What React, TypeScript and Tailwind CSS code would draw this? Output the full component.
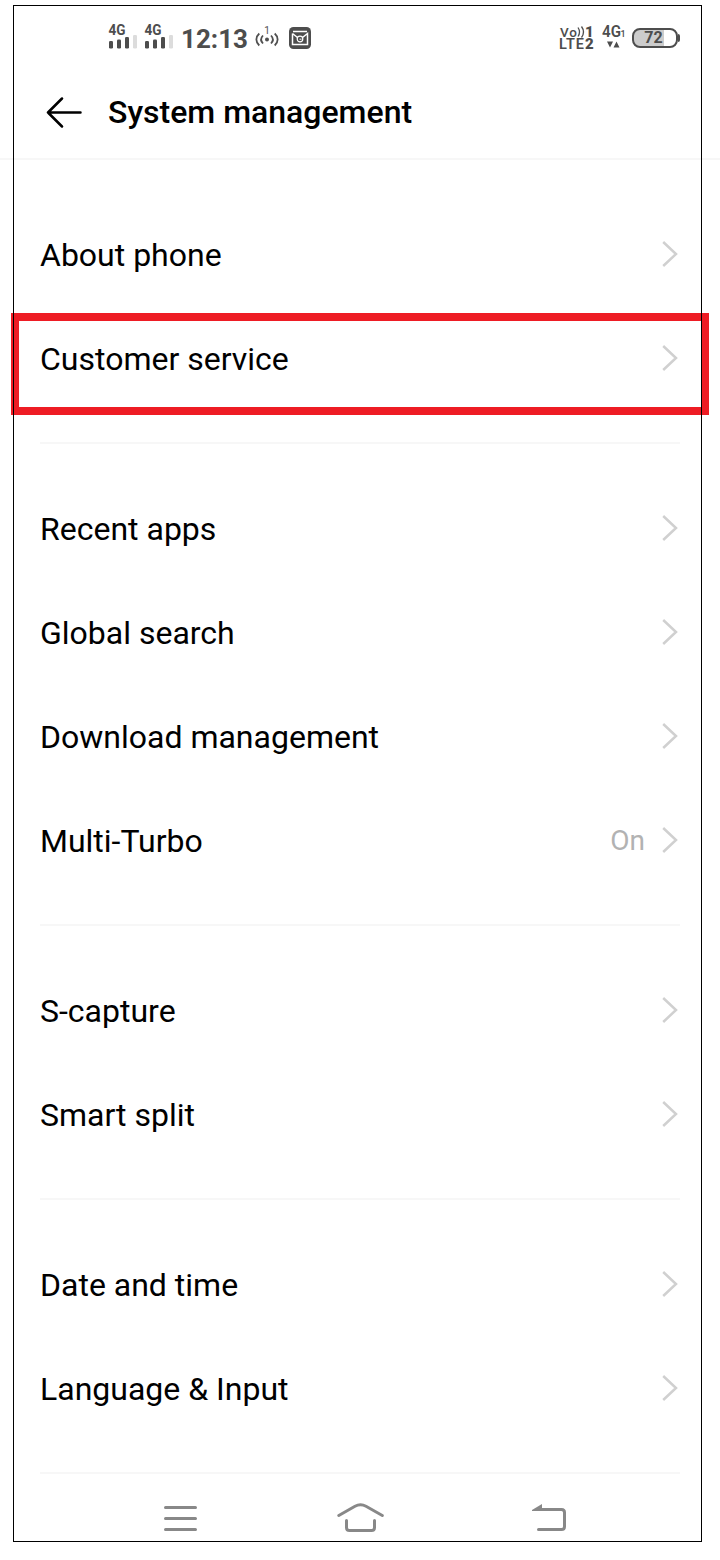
import React from 'react';

interface Item {
  label: string;
  value?: string;
  highlighted?: boolean;
}

const sections: Item[][] = [
  [{ label: 'About phone' }, { label: 'Customer service', highlighted: true }],
  [
    { label: 'Recent apps' },
    { label: 'Global search' },
    { label: 'Download management' },
    { label: 'Multi-Turbo', value: 'On' },
  ],
  [{ label: 'S-capture' }, { label: 'Smart split' }],
  [{ label: 'Date and time' }, { label: 'Language & Input' }],
];

const SignalIcon = () => (
  <svg width="36" height="30" viewBox="0 0 36 30" fill="#4d4d4d">
    <text x="0.5" y="12" fontSize="14" fontWeight="700" textLength="17" lengthAdjust="spacingAndGlyphs">4G</text>
    <rect x="1" y="18" width="4" height="7.5" rx="1.2" />
    <rect x="9" y="16.5" width="4" height="9" rx="1.2" />
    <rect x="17" y="14" width="4" height="11.5" rx="1.2" />
    <rect x="25" y="12" width="4" height="13.5" rx="1.2" fill="#dcdcdc" />
  </svg>
);

const HotspotIcon = () => (
  <svg width="24" height="28" viewBox="0 0 24 28" fill="none" stroke="#505050" strokeWidth="1.8">
    <path d="M4.3 9.5C0.4 13 0.4 18 4.3 21.5M8 11.5C5.6 14 5.6 17 8 19.5M19.7 9.5c3.9 3.5 3.9 8.5 0 12M16 11.5c2.4 2.5 2.4 5.5 0 8" />
    <circle cx="12" cy="15.5" r="2" fill="#505050" stroke="none" />
    <text x="9.2" y="10" fontSize="10" fill="#505050" stroke="none">1</text>
  </svg>
);

const MailIcon = () => (
  <svg width="22" height="22" viewBox="0 0 22 22" fill="none">
    <rect width="22" height="22" rx="4.5" fill="#4d4d4d" />
    <path d="M4 4.5h14" stroke="#fff" strokeWidth="1.5" />
    <path d="M3.5 6.5v11h15v-11l-5 4M3.5 6.5l5 4" stroke="#fff" strokeWidth="1.5" />
    <circle cx="11" cy="12" r="2.8" stroke="#fff" strokeWidth="1.2" />
    <path d="M10.5 12.2h2" stroke="#fff" />
  </svg>
);

const VolteIcon = () => (
  <svg width="38" height="30" viewBox="0 0 38 30" fill="#4d4d4d">
    <text x="1" y="13.5" fontSize="13.5" fontWeight="500" textLength="17">Vo</text>
    <path d="M19 4.5q3 4.5 0 9M22.5 3.5q4 5.5 0 11" fill="none" stroke="#4d4d4d" strokeWidth="1.3" />
    <text x="26" y="13.5" fontSize="15" fontWeight="900">1</text>
    <text x="0" y="26" fontSize="14.5" fontWeight="600" textLength="25">LTE</text>
    <text x="26" y="26" fontSize="15" fontWeight="900">2</text>
  </svg>
);

const DataIcon = () => (
  <svg width="26" height="30" viewBox="0 0 26 30" fill="#4d4d4d">
    <text x="0" y="14" fontSize="16.5" fontWeight="600" textLength="19" lengthAdjust="spacingAndGlyphs">4G</text>
    <text x="18.5" y="14" fontSize="9" fontWeight="500">1</text>
    <path d="M5 18.500h6l-3 6zM11.5 24.500h6l-3-6z" />
  </svg>
);

const Battery = () => (
  <div className="flex items-center">
    <div className="flex h-5 w-[46px] items-center justify-center rounded-[8px] border-2 border-[#4d4d4d] bg-[linear-gradient(to_right,#cccccc_72%,#ffffff_72%)] pr-[3px] text-[16px] font-bold leading-none">
      72
    </div>
    <div className="h-2 w-[2px] rounded-r bg-[#4d4d4d]" />
  </div>
);

const Chevron = () => (
  <svg width="18" height="28" viewBox="0 0 18 28" fill="none" stroke="#d0d0d0" strokeWidth="2.5">
    <path d="M2.2 2L15 14L2.2 26" />
  </svg>
);

const Row: React.FC<{ item: Item }> = ({ item }) => (
  <div className="relative flex h-[104px] items-center justify-between pl-10 pr-[41px]">
    <span className="pt-[2px] text-[32px] leading-[38px] text-black">{item.label}</span>
    <div className="flex items-center gap-4">
      {item.value && <span className="pt-[2px] text-[28px] leading-8 text-[#b2b2b2]">{item.value}</span>}
      <Chevron />
    </div>
    {item.highlighted && (
      <div className="pointer-events-none absolute left-[11px] top-[7px] h-[102px] w-[698px] border-8 border-[#ee1c24]" />
    )}
  </div>
);

const App = () => (
  <div className="relative h-[1560px] w-[720px] overflow-hidden bg-white font-['Roboto',sans-serif]">
    <div className="flex h-[76px] items-center justify-between pl-[108px] pr-10 text-[#4d4d4d]">
      <div className="flex items-center">
        <SignalIcon />
        <SignalIcon />
        <span className="ml-[1px] w-[74px] pt-[2px] text-[26px] font-bold leading-none">12:13</span>
        <HotspotIcon />
        <span className="ml-[10px]">
          <MailIcon />
        </span>
      </div>
      <div className="flex items-center">
        <VolteIcon />
        <span className="ml-[5px] mr-1">
          <DataIcon />
        </span>
        <Battery />
      </div>
    </div>

    <div className="flex h-[84px] items-center border-b-2 border-[#f7f7f7] pb-[10px] pl-[46px]">
      <svg width="36" height="32" viewBox="0 0 36 32" fill="none" stroke="#000" strokeWidth="2.5" strokeLinecap="round" strokeLinejoin="round">
        <path d="M16 2.5L2 16.5L16 30.5M2 16.5h32.5" />
      </svg>
      <h1 className="ml-[26px] text-[32px] font-medium leading-[38px] text-black">System management</h1>
    </div>

    <div className="pt-[10px]">
      {sections.map((items, idx) => (
        <div key={idx}>
          <div className="py-8">
            {items.map((item) => (
              <Row key={item.label} item={item} />
            ))}
          </div>
          <div className="mx-10 h-[2px] bg-[#f7f7f7]" />
        </div>
      ))}
    </div>

    <div className="flex h-[86px] items-center pl-[163px] pt-[2px] text-[#888888]">
      <svg width="34" height="28" viewBox="0 0 34 28" fill="none" stroke="currentColor" strokeWidth="3" strokeLinecap="round">
        <path d="M2.5 3.5h30M2.5 14.5h30M2.5 25.5h30" />
      </svg>
      <svg className="ml-[140px]" width="48" height="32" viewBox="0 0 48 32" fill="none" stroke="currentColor" strokeWidth="3" strokeLinecap="round">
        <path d="M1.8 13.5L18 4.3q5.5-3 11 0L45.3 13.500M9.5 18.500v7q0 3 3 3h22q3 0 3-3v-7" />
      </svg>
      <svg className="ml-[146px]" width="36" height="30" viewBox="0 0 36 30" fill="none" stroke="currentColor" strokeWidth="3" strokeLinecap="round">
        <path d="M8 6.5h22.500q3 0 3 3v14q0 3-3 3H7.500" />
        <path d="M1 7L11 1V8H1z" fill="currentColor" stroke="none" />
      </svg>
    </div>

    {/* device outline sits above the highlight */}
    <div className="pointer-events-none absolute left-[13px] top-[5px] h-[1537px] w-[689px] border border-black" />
  </div>
);

export default App;
